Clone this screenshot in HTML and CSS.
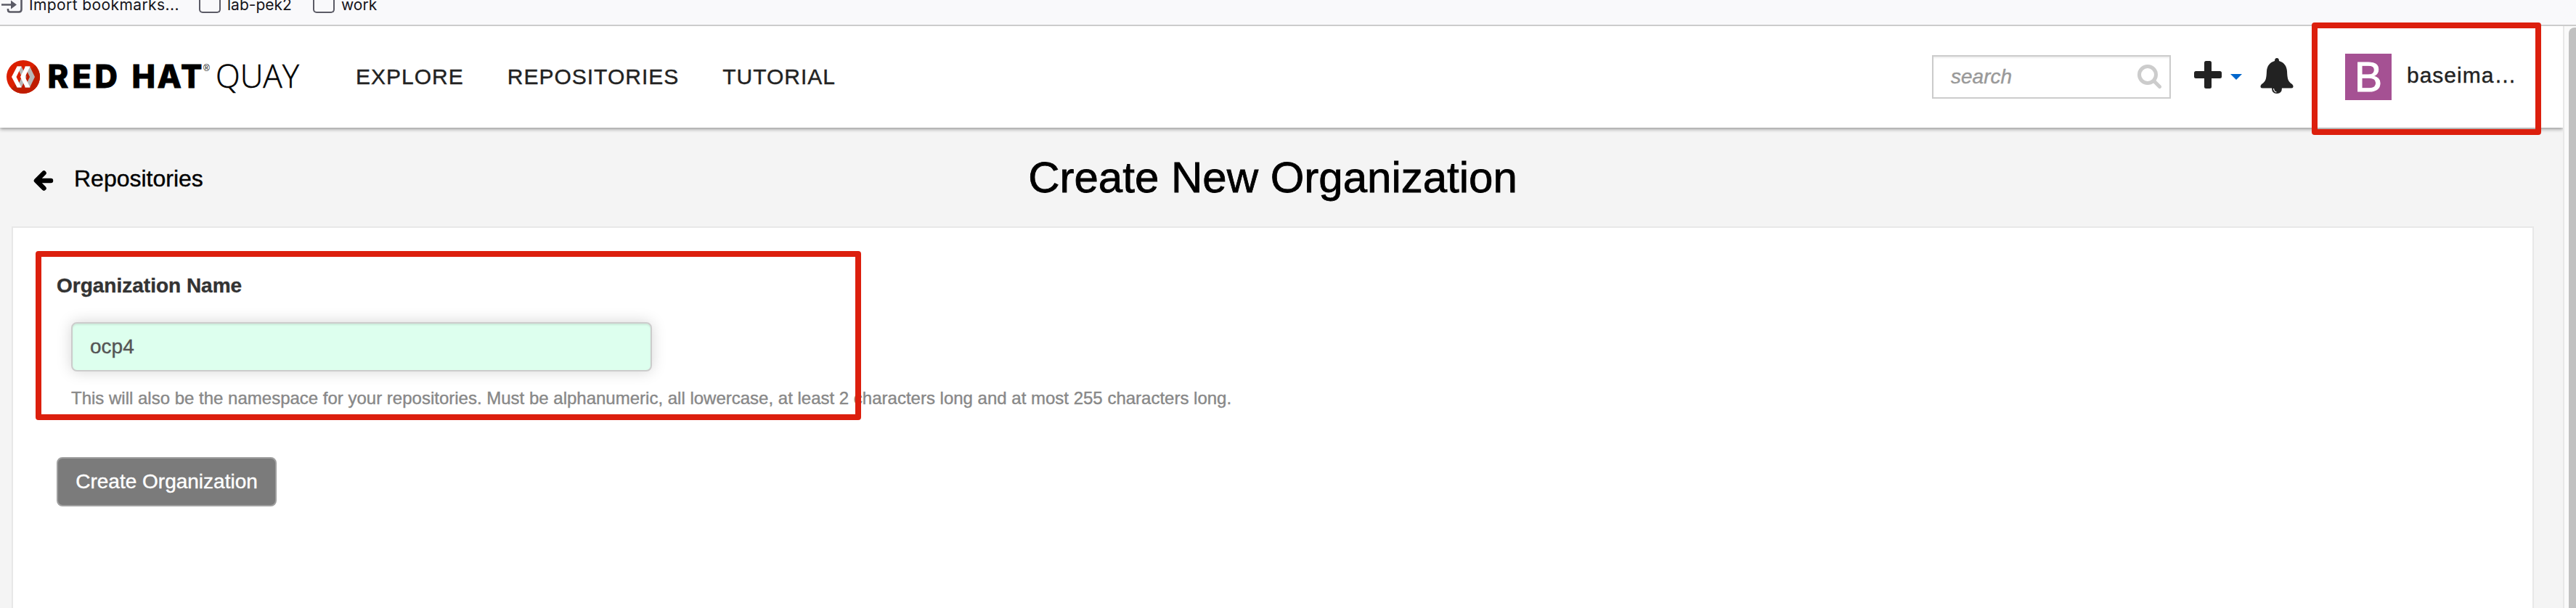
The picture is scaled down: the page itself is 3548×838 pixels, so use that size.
FILE: index.html
```html
<!DOCTYPE html>
<html lang="en">
<head>
<meta charset="utf-8">
<title>Create New Organization</title>
<link rel="stylesheet" href="styles.css">
</head>
<body>
<div class="bookmarks">
  <div class="bookmark import">
    <svg class="bm-icon" width="30" height="18" viewBox="0 0 30 18" fill="none" stroke="#5b5b66" stroke-width="2.6"><path d="M10 12v1.500q0 3 3 3h12q3.500 0 3.500-3.500V0M1 6.500h17"/><path d="M14 .5l8 6-8 6z" fill="#5b5b66" stroke="none"/></svg>
    <span>Import bookmarks...</span>
  </div>
  <div class="bookmark lab"><span class="folder"></span><span>lab-pek2</span></div>
  <div class="bookmark work"><span class="folder"></span><span>work</span></div>
</div>
<div class="viewport">
  <div class="page">
    <header class="header">
      <svg class="logo" width="420" height="60" viewBox="0 0 420 60">
        <circle cx="32" cy="30" r="23" fill="#db1f00"/>
        <path d="M48.300 13.700A23 23 0 0 1 15.700 46.300z" fill="#bf1c00"/>
        <path d="M34 15.500h7l7 14.500-7 14.500h-7l7-14.500z" fill="#b8b8b8"/>
        <path d="M23.500 15.500h6l7 14.500-7 14.500h-6L30 30z" fill="#b8b8b8"/>
        <path d="M23.500 15.500h6L22.500 30l7 14.500h-6L16 30z" fill="#fff"/>
        <path d="M35 15.500h6.500L34.500 30l7 14.500H35L28 30z" fill="#fff"/>
        <text class="brand" x="65.500 99.500 130.500" y="45">RED</text>
        <text class="brand" x="181.500 216.500 249" y="45">HAT</text>
        <text class="reg" x="280" y="22">®</text>
        <text class="product" x="297" y="45" textLength="115" lengthAdjust="spacingAndGlyphs">QUAY</text>
      </svg>
      <nav class="nav"><a>EXPLORE</a><a>REPOSITORIES</a><a>TUTORIAL</a></nav>
      <div class="tools">
        <div class="search"><span>search</span>
          <svg width="34" height="34" viewBox="0 0 34 34" fill="none" stroke="#ccc" stroke-width="5"><circle cx="14" cy="14" r="11.500"/><path d="M23 23l7.500 7.500" stroke-linecap="round"/></svg>
        </div>
        <svg class="plus" width="38" height="38" viewBox="0 0 38 38" fill="#222"><rect x="14" width="10" height="38" rx="2.500"/><rect y="14" width="38" height="10" rx="2.500"/></svg>
        <svg class="caret" width="16" height="8" viewBox="0 0 16 8"><path d="M0 0h16L8 8z" fill="#06c"/></svg>
        <svg class="bell" width="46" height="50" viewBox="0 0 46 50"><path d="M20 4q0-4 3-4t3 4c7 2 10.500 7 11 14 .5 9 .5 14 7 18q2 2 1.500 4-.5 1.500-3 1.500H3.500Q1 41.500.5 40 0 38 2 36c6.500-4 6.500-9 7-18C9.500 11 13 6 20 4z" fill="#222"/><path d="M16 41h14q0 8-7 8t-7-8z" fill="#222"/><path d="M18.500 42q.5 4.500 4 5" fill="none" stroke="#fff" stroke-width="1.200"/></svg>
        <div class="avatar">B</div>
        <span class="user">baseima…</span>
      </div>
    </header>
    <div class="title-bar">
      <svg class="back" width="28" height="28" viewBox="0 0 28 28" fill="none" stroke="#000" stroke-width="6.500" stroke-linejoin="round" stroke-linecap="round"><path d="M14.500 3.500L4 14l10.500 10.500M5 14h19"/></svg>
      <a class="crumb">Repositories</a>
      <h1>Create New Organization</h1>
    </div>
    <main class="card">
      <label class="label">Organization Name</label>
      <div class="input">ocp4</div>
      <p class="help">This will also be the namespace for your repositories. Must be alphanumeric, all lowercase, at least 2 characters long and at most 255 characters long.</p>
      <button class="submit">Create Organization</button>
    </main>
  </div>
  <div class="scrollbar"><div class="thumb"></div></div>
</div>
<div class="mark mark-user"></div>
<div class="mark mark-form"></div>
</body>
</html>
```
FILE: styles.css
```css
* { box-sizing: border-box; }
body { margin: 0; width: 3548px; height: 838px; overflow: hidden; position: relative; display: flex; flex-direction: column; background: #f4f4f4; font-family: "Liberation Sans", Arial, sans-serif; -webkit-text-stroke: .4px currentColor; }
.bookmarks { height: 36px; flex: none; overflow: hidden; display: flex; align-items: flex-start; background: #f9f9fb; border-bottom: 2px solid #ccc; font: 21px/14px Inter, sans-serif; color: #15141a; -webkit-text-stroke: 0; }
.bookmark { display: flex; align-items: flex-start; white-space: nowrap; }
.import { width: 274px; padding-left: 1px; gap: 9px; letter-spacing: .4px; }
.lab { width: 157px; gap: 9px; }
.work { gap: 9px; }
.folder { width: 30px; height: 18px; border: 2.600px solid #5b5b66; border-top: 0; border-radius: 0 0 5px 5px; }
.viewport { flex: 1; display: flex; min-height: 0; }
.page { width: 3530px; display: flex; flex-direction: column; overflow: hidden; }
.header { height: 140px; flex: none; display: flex; background: #fff; box-shadow: 0 2px 5px rgba(0,0,0,.4); }
.logo { margin-top: 40px; flex: none; }
.brand { font: 800 43.500px Inter, sans-serif; stroke: #000; stroke-width: .8px; }
.reg { font: 12px "Liberation Sans", sans-serif; -webkit-text-stroke: 0; }
.product { font: 300 44px "Open Sans", sans-serif; stroke: #000; stroke-width: .5px; }
.nav { display: flex; gap: 60px; margin-left: 70px; padding-top: 50px; font-size: 30px; line-height: 40px; letter-spacing: 1px; color: #222; }
.tools { margin-left: auto; display: flex; align-items: flex-start; width: 869px; }
.search { width: 329px; height: 60px; margin-top: 40px; border: 2px solid #ccc; box-shadow: inset 0 2px 2px rgba(0,0,0,.07); padding: 0 10px 0 24px; display: flex; justify-content: space-between; align-items: center; color: #999; font-size: 28px; font-style: italic; }
.plus { margin: 48px 0 0 32px; }
.caret { margin: 66px 0 0 12px; }
.bell { margin: 44px 0 0 25px; }
.avatar { width: 64px; height: 64px; margin: 38px 0 0 71px; background: #a55193; color: #fff; font-size: 57px; line-height: 64px; text-align: center; -webkit-text-stroke: 1px #fff; }
.user { margin: 48px 0 0 21px; font-size: 30px; line-height: 40px; letter-spacing: 1px; color: #222; }
.title-bar { height: 136px; flex: none; display: grid; grid-template-columns: 104px 600px 1fr 704px; align-items: start; }
.back { margin: 59px 0 0 46px; }
.crumb { margin-left: -2px; padding-top: 50px; font-size: 32px; line-height: 40px; }
h1 { margin: 0; padding-top: 39px; font-size: 60px; line-height: 60px; font-weight: 400; text-align: center; margin-right: 24px; -webkit-text-stroke: .8px currentColor; }
.card { flex: 1; width: 3474px; margin-left: 16px; padding: 60px 0 0 60px; background: #fff; border: 2px solid #e8e8e8; border-bottom: 0; }
.label { display: block; font-size: 28px; line-height: 40px; font-weight: 700; color: #333; }
.input { width: 800px; height: 68px; margin: 30px 0 0 20px; padding-left: 24px; border: 2px solid #ccc; border-radius: 8px; background: #dfe; font-size: 28px; line-height: 64px; color: #555; box-shadow: inset 0 2px 2px rgba(0,0,0,.075), 0 0 20px rgba(0,0,0,.17); }
.help { margin: 21px 0 0 20px; font-size: 24px; line-height: 32px; color: #888; white-space: nowrap; }
.submit { display: block; width: 303px; height: 68px; margin-top: 65px; padding: 0; border: 2px solid #a0a0a0; border-radius: 8px; background: #7b7b7b; color: #fff; font: 28px/64px "Liberation Sans", Arial, sans-serif; }
.scrollbar { width: 18px; background: #fafafa; border-left: 2px solid #e8e8e8; padding: 2px 0 0 6px; }
.thumb { height: 820px; background: #c1c1c1; border-radius: 8px 0 0 0; }
.mark { position: absolute; border: 8px solid #dc1f0d; border-radius: 4px; }
.mark-user { left: 3184px; top: 31px; width: 316px; height: 155px; }
.mark-form { left: 49px; top: 346px; width: 1137px; height: 233px; }
```
